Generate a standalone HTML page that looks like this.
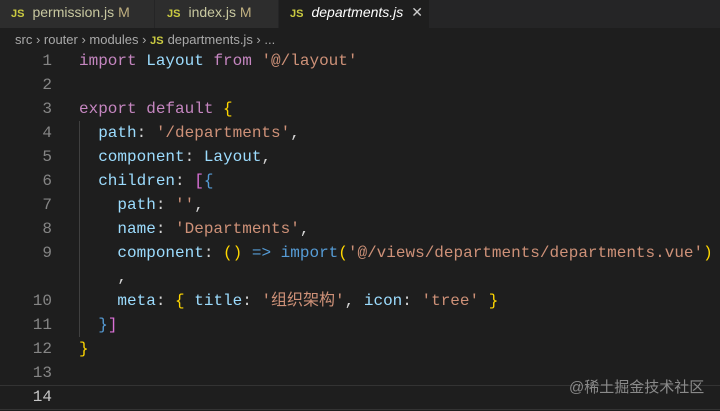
<!DOCTYPE html>
<html><head><meta charset="utf-8"><style>
body{margin:0;width:720px;height:411px;background:#1e1e1e;overflow:hidden;font-family:"Liberation Sans",sans-serif;position:relative}
.tabs{position:absolute;top:0;left:0;width:720px;height:28px;background:#252526}
.tab{position:absolute;top:0;height:28px;line-height:24px;font-size:14px;color:#c8c8a0}
.js{color:#cbcb41;font-weight:bold;font-size:11px;margin-right:8px}
.crumb{position:absolute;top:28px;left:15px;height:24px;line-height:24px;font-size:13px;color:#a9a9a9}
.code{position:absolute;top:49px;left:0;font-family:"Liberation Mono","Noto Sans CJK SC",monospace;font-size:16px}
.l{height:24px;line-height:24px;white-space:pre;position:relative}
.n{position:absolute;left:0;width:52px;text-align:right;color:#858585}
.t{position:absolute;left:79px;color:#d4d4d4}
.k{color:#c586c0}.v{color:#9cdcfe}.s{color:#ce9178}.y{color:#ffd700}.p{color:#da70d6}.b{color:#569cd6}.f{color:#4fc1ff}
</style></head><body>
<div class="tabs">
<div class="tab" style="left:0;width:154px;background:#2d2d2d;padding-left:11px;box-sizing:border-box"><span class="js">JS</span>permission.js <span style="color:#c0b080">M</span></div>
<div class="tab" style="left:155px;width:123px;background:#2d2d2d;padding-left:12px;box-sizing:border-box"><span class="js">JS</span>index.js <span style="color:#c0b080">M</span></div>
<div class="tab" style="left:279px;width:150px;background:#1e1e1e;padding-left:11px;box-sizing:border-box;color:#fff;font-style:italic"><span class="js" style="font-style:normal">JS</span>departments.js <span style="font-style:normal;color:#ccc;margin-left:4px">✕</span></div>
</div>
<div class="crumb">src › router › modules › <span class="js" style="margin-right:4px">JS</span>departments.js › ...</div>
<div style="position:absolute;left:79px;top:121px;width:1px;height:216px;background:#404040"></div>
<div style="position:absolute;left:0;top:385px;width:720px;height:23px;border-top:1px solid #333;border-bottom:1px solid #333"></div>
<div class="code">
<div class="l"><span class="n">1</span><span class="t"><span class="k">import</span> <span class="v">Layout</span> <span class="k">from</span> <span class="s">'@/layout'</span></span></div>
<div class="l"><span class="n">2</span></div>
<div class="l"><span class="n">3</span><span class="t"><span class="k">export</span> <span class="k">default</span> <span class="y">{</span></span></div>
<div class="l"><span class="n">4</span><span class="t">  <span class="v">path</span>: <span class="s">'/departments'</span>,</span></div>
<div class="l"><span class="n">5</span><span class="t">  <span class="v">component</span>: <span class="v">Layout</span>,</span></div>
<div class="l"><span class="n">6</span><span class="t">  <span class="v">children</span>: <span class="p">[</span><span class="b">{</span></span></div>
<div class="l"><span class="n">7</span><span class="t">    <span class="v">path</span>: <span class="s">''</span>,</span></div>
<div class="l"><span class="n">8</span><span class="t">    <span class="v">name</span>: <span class="s">'Departments'</span>,</span></div>
<div class="l"><span class="n">9</span><span class="t">    <span class="v">component</span>: <span class="y">()</span> <span class="b">=&gt;</span> <span class="b">import</span><span class="y">(</span><span class="s">'@/views/departments/departments.vue'</span><span class="y">)</span></span></div>
<div class="l"><span class="t">    ,</span></div>
<div class="l"><span class="n">10</span><span class="t">    <span class="v">meta</span>: <span class="y">{</span> <span class="v">title</span>: <span class="s">'组织架构'</span>, <span class="v">icon</span>: <span class="s">'tree'</span> <span class="y">}</span></span></div>
<div class="l"><span class="n">11</span><span class="t">  <span class="b">}</span><span class="p">]</span></span></div>
<div class="l"><span class="n">12</span><span class="t"><span class="y">}</span></span></div>
<div class="l"><span class="n">13</span></div>
<div class="l"><span class="n" style="color:#c6c6c6">14</span></div>
</div>
<div style="position:absolute;left:569px;top:376px;font-size:15px;color:#8a8a8a;font-family:'Liberation Sans','Noto Sans CJK SC',sans-serif">@稀土掘金技术社区</div>
</body></html>
